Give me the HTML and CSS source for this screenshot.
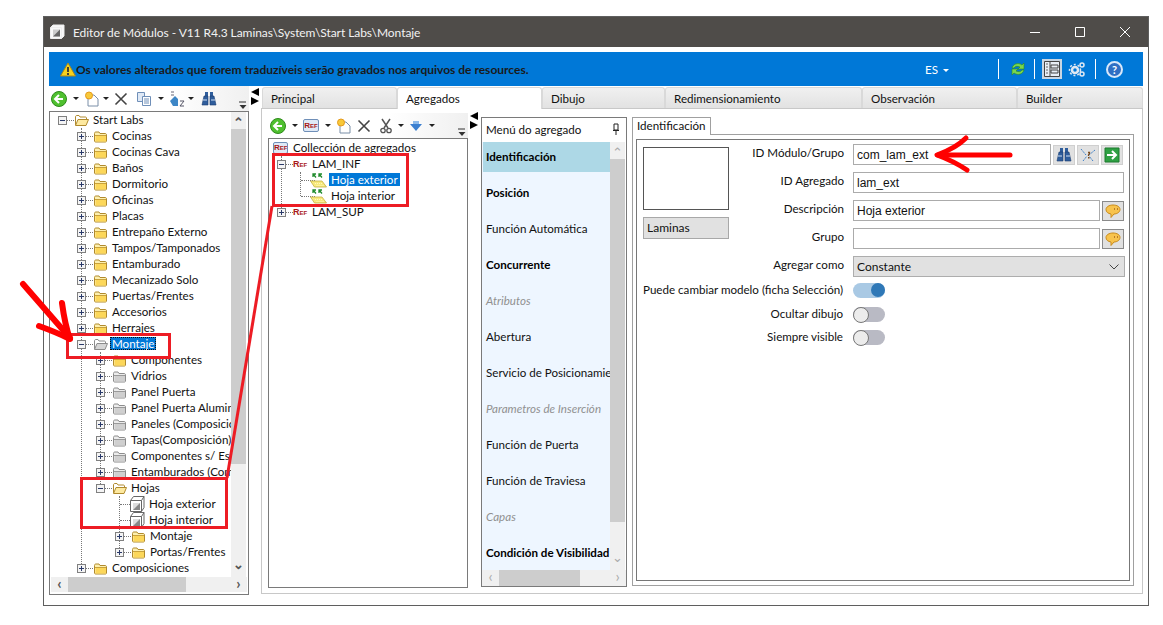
FILE: index.html
```html
<!doctype html>
<html lang="es">
<head>
<meta charset="utf-8">
<title>Editor de Módulos</title>
<link rel="stylesheet" href="styles.css">
</head>
<body>

<svg class="defs" width="0" height="0">
	<symbol id="folder" viewBox="0 0 15 14"><path d="M1.500 4.500c0-1 .5-1.500 1.500-1.500h3l1 1.500h5c1 0 1.500.5 1.500 1.500v6c0 .5-.5 1-1 1H2.500c-.5 0-1-.5-1-1z" fill="#fdf0b0" stroke="#b08a2e"/><path d="M2.500 7h10.500v5.500H2.500z" fill="#fcd75a"/><path d="M2 6.500h11" stroke="#c9a23c"/></symbol>
	<symbol id="folder-grey" viewBox="0 0 15 14"><path d="M1.500 4.500c0-1 .5-1.500 1.500-1.500h3l1 1.500h5c1 0 1.500.5 1.500 1.500v6c0 .5-.5 1-1 1H2.500c-.5 0-1-.5-1-1z" fill="#ececec" stroke="#8c8c8c"/><path d="M2.500 7h10.500v5.500H2.500z" fill="#cfcfcf"/><path d="M2 6.500h11" stroke="#9a9a9a"/></symbol>
	<symbol id="folder-open" viewBox="0 0 15 14"><path d="M1.500 12V4c0-1 .5-1.500 1.500-1.500h2L6 4h5.500c.5 0 1 .5 1 1v2" fill="#fff" stroke="#b08a2e"/><path d="M1.500 12.500L4 6.500h10.500L12 12.500z" fill="#fde9a0" stroke="#b08a2e"/></symbol>
	<symbol id="folder-grey-open" viewBox="0 0 15 14"><path d="M1.500 12V4c0-1 .5-1.500 1.500-1.500h2L6 4h5.500c.5 0 1 .5 1 1v2" fill="#fff" stroke="#8c8c8c"/><path d="M1.500 12.500L4 6.500h10.500L12 12.500z" fill="#d6d6d6" stroke="#8c8c8c"/></symbol>
	<symbol id="cube" viewBox="0 0 16 16"><path d="M1.500 4.500h11v11h-11zM1.500 4.500L4.500.5h10.500v11l-2.500 4M12.500 4.500l2.500-4" fill="#fff" stroke="#666"/><path d="M4 7h7v7H4z" fill="#ddd"/><path d="M4 14l7-7v7z" fill="#888"/></symbol>
	<symbol id="sheet" viewBox="0 0 17 16"><path d="M.5 9h11.500l4.500 6H4.500z" fill="#f7e97c" stroke="#c4b044" stroke-width=".8"/><path d="M5 11.500h7M6.500 13.500h7" stroke="#fff8c0" stroke-dasharray="1 1"/><path d="M3 2l3 3.500M3 5V2h3M9 2l3 3.500M9 5V2h3" fill="none" stroke="#1f8a2c" stroke-width="1.300"/></symbol>
	<symbol id="back" viewBox="0 0 16 16"><circle cx="8" cy="8" r="7.500" fill="#4fc02f" stroke="#2f8a1c"/><path d="M8 4L4 8l4 4M4.500 8H12" fill="none" stroke="#fff" stroke-width="2"/></symbol>
	<symbol id="newdoc" viewBox="0 0 16 16"><path d="M4 4h6l4 4v7H4z" fill="#fff" stroke="#7a8fa8"/><circle cx="5" cy="4.500" r="3.500" fill="#f8c93a" stroke="#e59a1c"/></symbol>
	<symbol id="cross" viewBox="0 0 14 14"><path d="M1.500 1.500l11 11M12.500 1.500l-11 11" stroke="#444" stroke-width="1.600"/></symbol>
	<symbol id="copy" viewBox="0 0 16 16"><path d="M1.500 1.500h7v9h-7z" fill="#dfe9f6" stroke="#6f8fb8"/><path d="M6.500 5.500h8v9h-8z" fill="#fff" stroke="#6f8fb8"/><path d="M8 8h5M8 10h5M8 12h5" stroke="#6f8fb8"/></symbol>
	<symbol id="sort" viewBox="0 0 16 16"><path d="M2 1h3M2 4h3" stroke="#667"/><path d="M1 10l5-5 3 3v7H4z" fill="#3d86c6"/><path d="M11 10h4l-4 5h4" fill="none" stroke="#556"/></symbol>
	<symbol id="bino" viewBox="0 0 16 16"><path d="M4 1h3v5H4zM9 1h3v5H9z" fill="#2f5d9c"/><path d="M1 14l2-9h4v9zM15 14l-2-9H9v9z" fill="#2f5d9c" stroke="#183a6e" stroke-width=".6"/><path d="M2 9h4M10 9h4" stroke="#cfe0f4"/></symbol>
	<symbol id="scissors" viewBox="0 0 12 16"><path d="M2 1l6 9M10 1L4 10" stroke="#555" stroke-width="1.500"/><circle cx="3" cy="12.500" r="2.200" fill="#fff" stroke="#555" stroke-width="1.300"/><circle cx="9" cy="12.500" r="2.200" fill="#fff" stroke="#555" stroke-width="1.300"/></symbol>
	<symbol id="down" viewBox="0 0 14 12"><path d="M1 4h12L7 11z" fill="#3b7fd0"/><path d="M4 1h6v3H4z" fill="#8cb9ea"/></symbol>
	<symbol id="balloon" viewBox="0 0 16 16"><path d="M8 2c4 0 7 1.800 7 4.500S12 11 9 11l-3 3.500V11C3 10.500 1 9 1 6.500S4 2 8 2z" fill="#f8c34c" stroke="#c98b1c"/><path d="M9 6h1M12 6h1" stroke="#a5641c" stroke-width="1.500"/></symbol>
	<symbol id="grip" viewBox="0 0 8 9"><path d="M0 1h7" stroke="#333"/><path d="M0.500 4h7L4 8z" fill="#333"/></symbol>
</svg>

<div class="window">
	<div class="titlebar">
		<svg class="title-icon" width="16" height="16" viewBox="0 0 16 16"><path d="M1.500 3.500h11v11h-11zM1.500 3.500L4 1h11v11l-2.500 2.500" fill="#f8f8f8" stroke="#eee"/><path d="M4 5.500h7v7H4z" fill="#ccc"/><path d="M4 12.500l7-7v7z" fill="#666"/></svg>
		<span class="title-text">Editor de Módulos - V11 R4.3 Laminas\System\Start Labs\Montaje</span>
		<div class="win-btns">
			<span class="win-btn"><svg width="10" height="10"><path d="M0 5.500h10" stroke="#fff"/></svg></span>
			<span class="win-btn"><svg width="10" height="10"><path d="M.5.500h9v9h-9z" fill="none" stroke="#fff"/></svg></span>
			<span class="win-btn"><svg width="10" height="10"><path d="M0 0l10 10M10 0L0 10" stroke="#fff"/></svg></span>
		</div>
	</div>

	<div class="content">
		<div class="banner">
			<svg class="warn" width="16" height="15" viewBox="0 0 16 15"><path d="M8 1l7.500 13H.5z" fill="#f7d21e" stroke="#a8891a"/><path d="M8 5v5M8 11v2" stroke="#333" stroke-width="1.800"/></svg>
			<span class="banner-text">Os valores alterados que forem traduzíveis serão gravados nos arquivos de resources.</span>
			<span class="lang">ES <i class="caret caret--white"></i></span>
			<span class="sep"></span>
			<svg class="ban-icon" width="16" height="16" viewBox="0 0 16 16"><path d="M2 7c1-4 6-6 10-3l2-2v6H8l2-2C8 5 5 5 4 7z" fill="#78d650" stroke="#2c8a20" stroke-width=".6"/><path d="M14 9c-1 4-6 6-10 3l-2 2V8h6l-2 2c2 1 5 1 6-1z" fill="#78d650" stroke="#2c8a20" stroke-width=".6"/></svg>
			<span class="sep sep--b"></span>
			<span class="ban-toggle"><svg width="16" height="16" viewBox="0 0 16 16"><path d="M.5.500h15v15H.5z" fill="#e8eef5" stroke="#444"/><path d="M6 1v14M7 4h7v3H7zM7 9h7v3H7z" fill="none" stroke="#444"/><path d="M2 3h2M2 6h2M2 9h2M2 12h2" stroke="#666"/></svg></span>
			<svg class="ban-gears" width="18" height="18" viewBox="0 0 18 18"><circle cx="7" cy="10" r="3" fill="none" stroke="#dfe8f2" stroke-width="2.500"/><circle cx="7" cy="10" r="5.500" fill="none" stroke="#dfe8f2" stroke-width="1.500" stroke-dasharray="2 2"/><circle cx="14" cy="5" r="2" fill="none" stroke="#dfe8f2" stroke-width="1.500"/><circle cx="14" cy="14" r="2" fill="none" stroke="#dfe8f2" stroke-width="1.500"/></svg>
			<span class="sep sep--c"></span>
			<span class="help">?</span>
		</div>

		<div class="main">
			<div class="col-left">
				<div class="toolbar">
					<svg class="tb-16"><use href="#back"/></svg><i class="caret caret--a"></i>
					<svg class="tb-16 tb-new"><use href="#newdoc"/></svg><i class="caret"></i>
					<svg class="tb-14 tb-x"><use href="#cross"/></svg>
					<svg class="tb-16 tb-copy"><use href="#copy"/></svg><i class="caret caret--a"></i>
					<svg class="tb-16 tb-sort"><use href="#sort"/></svg><i class="caret"></i>
					<svg class="tb-16 tb-bino"><use href="#bino"/></svg>
					<svg class="grip"><use href="#grip"/></svg>
				</div>
				<div class="box box--tree">
					<div class="scroll-body">
						<ul class="tree">
							<li>
								<div class="row"><span class="ex"></span><svg class="ic"><use href="#folder-open"/></svg><span>Start Labs</span></div>
								<ul class="kids kids--main">
									<li><div class="row"><span class="ex ex--plus"></span><svg class="ic"><use href="#folder"/></svg><span>Cocinas</span></div></li>
									<li><div class="row"><span class="ex ex--plus"></span><svg class="ic"><use href="#folder"/></svg><span>Cocinas Cava</span></div></li>
									<li><div class="row"><span class="ex ex--plus"></span><svg class="ic"><use href="#folder"/></svg><span>Baños</span></div></li>
									<li><div class="row"><span class="ex ex--plus"></span><svg class="ic"><use href="#folder"/></svg><span>Dormitorio</span></div></li>
									<li><div class="row"><span class="ex ex--plus"></span><svg class="ic"><use href="#folder"/></svg><span>Oficinas</span></div></li>
									<li><div class="row"><span class="ex ex--plus"></span><svg class="ic"><use href="#folder"/></svg><span>Placas</span></div></li>
									<li><div class="row"><span class="ex ex--plus"></span><svg class="ic"><use href="#folder"/></svg><span>Entrepaño Externo</span></div></li>
									<li><div class="row"><span class="ex ex--plus"></span><svg class="ic"><use href="#folder"/></svg><span>Tampos/Tamponados</span></div></li>
									<li><div class="row"><span class="ex ex--plus"></span><svg class="ic"><use href="#folder"/></svg><span>Entamburado</span></div></li>
									<li><div class="row"><span class="ex ex--plus"></span><svg class="ic"><use href="#folder"/></svg><span>Mecanizado Solo</span></div></li>
									<li><div class="row"><span class="ex ex--plus"></span><svg class="ic"><use href="#folder"/></svg><span>Puertas/Frentes</span></div></li>
									<li><div class="row"><span class="ex ex--plus"></span><svg class="ic"><use href="#folder"/></svg><span>Accesorios</span></div></li>
									<li><div class="row"><span class="ex ex--plus"></span><svg class="ic"><use href="#folder"/></svg><span>Herrajes</span></div></li>
									<li>
										<div class="row"><span class="ex"></span><svg class="ic"><use href="#folder-grey-open"/></svg><span class="sel sel--focus">Montaje</span></div>
										<ul class="kids kids--short">
											<li><div class="row"><span class="ex ex--plus"></span><svg class="ic"><use href="#folder"/></svg><span>Componentes</span></div></li>
											<li><div class="row"><span class="ex ex--plus"></span><svg class="ic"><use href="#folder-grey"/></svg><span>Vidrios</span></div></li>
											<li><div class="row"><span class="ex ex--plus"></span><svg class="ic"><use href="#folder-grey"/></svg><span>Panel Puerta</span></div></li>
											<li><div class="row"><span class="ex ex--plus"></span><svg class="ic"><use href="#folder-grey"/></svg><span>Panel Puerta Aluminio</span></div></li>
											<li><div class="row"><span class="ex ex--plus"></span><svg class="ic"><use href="#folder-grey"/></svg><span>Paneles (Composición)</span></div></li>
											<li><div class="row"><span class="ex ex--plus"></span><svg class="ic"><use href="#folder-grey"/></svg><span>Tapas(Composición)</span></div></li>
											<li><div class="row"><span class="ex ex--plus"></span><svg class="ic"><use href="#folder-grey"/></svg><span>Componentes s/ Estructura</span></div></li>
											<li><div class="row"><span class="ex ex--plus"></span><svg class="ic"><use href="#folder-grey"/></svg><span>Entamburados (Composición)</span></div></li>
											<li>
												<div class="row"><span class="ex"></span><svg class="ic"><use href="#folder-open"/></svg><span>Hojas</span></div>
												<ul class="kids">
													<li><div class="row"><span class="stub"></span><svg class="ic-leaf"><use href="#cube"/></svg><span>Hoja exterior</span></div></li>
													<li><div class="row"><span class="stub"></span><svg class="ic-leaf"><use href="#cube"/></svg><span>Hoja interior</span></div></li>
													<li><div class="row"><span class="ex ex--plus"></span><svg class="ic"><use href="#folder"/></svg><span>Montaje</span></div></li>
													<li><div class="row"><span class="ex ex--plus"></span><svg class="ic"><use href="#folder"/></svg><span>Portas/Frentes</span></div></li>
												</ul>
											</li>
										</ul>
									</li>
									<li><div class="row"><span class="ex ex--plus"></span><svg class="ic"><use href="#folder"/></svg><span>Composiciones</span></div></li>
								</ul>
							</li>
						</ul>
						<div class="vbar">
							<span class="sb-btn">&#8963;</span>
							<span class="thumb thumb--tree"></span>
							<span class="sb-rest"></span>
							<span class="sb-btn sb-btn--down">&#8964;</span>
						</div>
					</div>
					<div class="hbar">
						<span class="sb-btn sb-btn--h">&#8249;</span>
						<span class="thumb thumb--tree-h"></span>
						<span class="sb-rest"></span>
						<span class="sb-btn sb-btn--h">&#8250;</span>
					</div>
				</div>
			</div>

			<div class="splitter"><i class="tri tri--l"></i><i class="tri tri--r"></i></div>

			<div class="col-right">
				<div class="tabs">
					<span class="tab tab--principal">Principal</span>
					<span class="tab tab--agregados tab--active">Agregados</span>
					<span class="tab tab--dibujo">Dibujo</span>
					<span class="tab tab--redim">Redimensionamiento</span>
					<span class="tab tab--obs">Observación</span>
					<span class="tab tab--builder">Builder</span>
				</div>
				<div class="tab-panel">
					<div class="col-agg">
						<div class="toolbar toolbar--agg">
							<svg class="tb-16"><use href="#back"/></svg><i class="caret caret--a"></i>
							<span class="ref ref--btn">Ref</span><i class="caret caret--a"></i>
							<svg class="tb-16 tb-new2"><use href="#newdoc"/></svg>
							<svg class="tb-14 tb-x"><use href="#cross"/></svg>
							<svg class="tb-scis"><use href="#scissors"/></svg><i class="caret caret--a"></i>
							<svg class="tb-down"><use href="#down"/></svg><i class="caret caret--a"></i>
							<svg class="grip"><use href="#grip"/></svg>
						</div>
						<div class="box box--agg">
							<ul class="tree tree--agg">
								<li>
									<div class="row row--root"><span class="ref ref--root">Ref</span><span>Collección de agregados</span></div>
									<ul class="kids kids--agg">
										<li>
											<div class="row"><span class="ex"></span><span class="ref">Ref</span><span>LAM_INF</span></div>
											<ul class="kids">
												<li><div class="row"><span class="stub"></span><svg class="ic-sheet"><use href="#sheet"/></svg><span class="sel">Hoja exterior</span></div></li>
												<li><div class="row"><span class="stub"></span><svg class="ic-sheet"><use href="#sheet"/></svg><span>Hoja interior</span></div></li>
											</ul>
										</li>
										<li><div class="row"><span class="ex ex--plus"></span><span class="ref">Ref</span><span>LAM_SUP</span></div></li>
									</ul>
								</li>
							</ul>
						</div>
					</div>

					<div class="splitter splitter--agg"><i class="tri tri--l"></i><i class="tri tri--r"></i></div>

					<div class="menu">
						<div class="menu-head">
							<span>Menú do agregado</span>
							<svg width="8" height="12" viewBox="0 0 8 12"><path d="M2 1h4v6H2zM1 7.500h6M4 8v4" fill="none" stroke="#222"/></svg>
						</div>
						<div class="menu-body">
							<ul class="menu-list">
								<li class="menu-item menu-item--bold menu-item--on">Identificación</li>
								<li class="menu-item menu-item--bold">Posición</li>
								<li class="menu-item">Función Automática</li>
								<li class="menu-item menu-item--bold">Concurrente</li>
								<li class="menu-item menu-item--off">Atributos</li>
								<li class="menu-item">Abertura</li>
								<li class="menu-item">Servicio de Posicionamiento</li>
								<li class="menu-item menu-item--off">Parametros de Inserción</li>
								<li class="menu-item">Función de Puerta</li>
								<li class="menu-item">Función de Traviesa</li>
								<li class="menu-item menu-item--off">Capas</li>
								<li class="menu-item menu-item--bold">Condición de Visibilidad</li>
							</ul>
							<div class="vbar vbar--menu">
								<span class="sb-btn sb-btn--light">&#8963;</span>
								<span class="thumb thumb--menu"></span>
								<span class="sb-rest"></span>
								<span class="sb-btn sb-btn--light sb-btn--down">&#8964;</span>
							</div>
						</div>
						<div class="hbar hbar--menu">
							<span class="sb-btn sb-btn--h sb-btn--light">&#8249;</span>
							<span class="thumb thumb--menu-h"></span>
							<span class="sb-rest"></span>
							<span class="sb-btn sb-btn--h sb-btn--light">&#8250;</span>
						</div>
					</div>

					<div class="detail">
						<span class="detail-tab">Identificación</span>
						<div class="frame">
							<div class="frame-inner">
								<div class="form-top">
									<div class="preview-col">
										<div class="preview"></div>
										<div class="preview-name">Laminas</div>
									</div>
									<div class="fields">
										<div class="field">
											<label class="field-label">ID Módulo/Grupo</label>
											<span class="input input--code">com_lam_ext</span>
											<span class="btn"><svg width="16" height="16"><use href="#bino"/></svg></span>
											<span class="btn"><svg width="16" height="16" viewBox="0 0 16 16"><path d="M1 2l5 6M15 3L9 8M3 14l4-5M13 14L9 9" stroke="#3d7fc6" stroke-dasharray="2 1" fill="none"/><path d="M8 5.500h1.500v1L8.500 8v1" fill="none" stroke="#7a4a1c" stroke-width="1.300"/><path d="M8 10h1.500v1.500H8z" fill="#7a4a1c"/></svg></span>
											<span class="btn"><svg width="16" height="16" viewBox="0 0 16 16"><path d="M1 1h14v14H1z" fill="#2ea043" stroke="#1c7a2e"/><path d="M3 8h8M8 4l4 4-4 4" fill="none" stroke="#fff" stroke-width="2"/></svg></span>
										</div>
										<div class="field">
											<label class="field-label">ID Agregado</label>
											<span class="input">lam_ext</span>
										</div>
										<div class="field">
											<label class="field-label">Descripción</label>
											<span class="input">Hoja exterior</span>
											<span class="btn btn--say"><svg width="16" height="16"><use href="#balloon"/></svg></span>
										</div>
										<div class="field">
											<label class="field-label">Grupo</label>
											<span class="input"></span>
											<span class="btn btn--say"><svg width="16" height="16"><use href="#balloon"/></svg></span>
										</div>
										<div class="field">
											<label class="field-label">Agregar como</label>
											<span class="select">Constante<svg width="10" height="6" viewBox="0 0 10 6"><path d="M.5.500L5 5 9.500.500" fill="none" stroke="#444"/></svg></span>
										</div>
									</div>
								</div>
								<div class="switches">
									<div class="switch-row"><span class="switch-label">Puede cambiar modelo (ficha Selección)</span><span class="switch switch--on"></span></div>
									<div class="switch-row"><span class="switch-label">Ocultar dibujo</span><span class="switch"></span></div>
									<div class="switch-row"><span class="switch-label">Siempre visible</span><span class="switch"></span></div>
								</div>
							</div>
						</div>
					</div>
				</div>
			</div>
		</div>
	</div>
</div>

<!-- marks drawn on top of the screenshot -->
<svg class="marks" width="1163" height="625" viewBox="0 0 1163 625">
	<g fill="none" stroke="#ed1c24" stroke-width="3">
		<path d="M67.500 334.500h102v23h-102z"/>
		<path d="M81.500 478.500h145v49h-145z"/>
		<path d="M273.500 154.500h134v51h-134z"/>
		<path d="M272 206L227 478"/>
	</g>
	<g fill="none" stroke="#f00" stroke-linecap="round" stroke-linejoin="round">
		<path d="M23 284L70 338" stroke-width="6"/>
		<path d="M62 303C64 318 66 328 70 339C60 334 50 330 39 326" stroke-width="6"/>
		<path d="M938 155H1010" stroke-width="5"/>
		<path d="M966 138C958 146 948 151 937 155C948 159 958 164 967 170" stroke-width="5"/>
	</g>
</svg>

</body>
</html>
```
FILE: styles.css
```css
* {
	box-sizing: border-box;
}

html, body {
	margin: 0;
	padding: 0;
	height: 100%;
	overflow: hidden;
	background: #fff;
}

body {
	position: relative;
	font-family: Lato, "Liberation Sans", Arial, sans-serif;
	font-size: 11.600px;
	color: #111;
}

ul {
	margin: 0;
	padding: 0;
	list-style: none;
}

.defs {
	position: absolute;
}

.marks {
	position: absolute;
	left: 0;
	top: 0;
	pointer-events: none;
}

.window {
	width: 1106px;
	height: 590px;
	margin: 16px 0 0 43px;
	border: 1px solid #5f5f5f;
	background: #fff;
}

/* title bar */
.titlebar {
	display: flex;
	align-items: center;
	height: 30px;
	padding-left: 5px;
	background: #4f4c49;
	color: #f2f2f2;
}

.title-icon {
	margin-right: 8px;
}

.title-text {
	font-size: 12px;
	letter-spacing: -0.060px;
}

.win-btns {
	display: flex;
	margin-left: auto;
	margin-right: 18px;
	gap: 35px;
}

.win-btn {
	display: flex;
}

.content {
	padding: 5px 5px 0;
}

/* blue banner */
.banner {
	display: flex;
	align-items: center;
	height: 34px;
	padding-left: 11px;
	background: #0078d7;
}

.warn {
	flex: none;
}

.banner-text {
	width: 849px;
	font-size: 12px;
	font-weight: bold;
	color: #1a1a1a;
	white-space: nowrap;
}

.lang {
	display: flex;
	align-items: center;
	width: 73px;
	color: #fff;
	gap: 5px;
}

.sep {
	width: 1px;
	height: 20px;
	background: #fff;
}

.sep--b {
	margin-left: 8px;
}

.sep--c {
	margin-left: 9px;
}

.ban-icon {
	margin-left: 11px;
}

.ban-toggle {
	display: flex;
	align-items: center;
	justify-content: center;
	width: 20px;
	height: 20px;
	margin-left: 7px;
	background: #c9d6e3;
}

.ban-gears {
	margin-left: 6px;
}

.help {
	width: 17px;
	height: 17px;
	margin-left: 10px;
	border: 2px solid #d8e8fa;
	border-radius: 50%;
	background: #2f6fc4;
	color: #fff;
	font-weight: bold;
	font-size: 11px;
	line-height: 13px;
	text-align: center;
}

/* main area */
.main {
	display: flex;
	height: 509px;
}

.col-left {
	width: 200px;
}

.toolbar {
	display: flex;
	align-items: center;
	height: 25px;
	padding-left: 2px;
	background: linear-gradient(90deg, #fff 60%, #f0f0f0);
}

.toolbar svg {
	flex: none;
}

.tb-16 {
	width: 16px;
	height: 16px;
}

.tb-14 {
	width: 14px;
	height: 14px;
}

.tb-new {
	margin-left: 5px;
}

.tb-new2 {
	margin-left: 5px;
}

.tb-x {
	margin-left: 5px;
}

.tb-copy {
	margin-left: 8px;
}

.tb-sort {
	margin-left: 5px;
}

.tb-bino {
	margin-left: 7px;
}

.tb-scis {
	width: 12px;
	height: 16px;
	margin-left: 9px;
}

.tb-down {
	width: 14px;
	height: 12px;
	margin-left: 5px;
}

.grip {
	width: 8px;
	height: 9px;
	margin-left: auto;
	margin-right: 2px;
	margin-top: 13px;
}

.caret {
	flex: none;
	width: 0;
	height: 0;
	margin-left: 3px;
	border-left: 3px solid transparent;
	border-right: 3px solid transparent;
	border-top: 3px solid #222;
}

.caret--a {
	margin-left: 6px;
}

.caret--white {
	margin: 2px 0 0;
	border-top-color: #fff;
}

.box {
	border: 1px solid #7a7a7a;
	background: #fff;
}

.box--tree {
	display: flex;
	flex-direction: column;
	height: 484px;
}

.scroll-body {
	display: flex;
	flex: 1;
	min-height: 0;
}

.tree {
	flex: 1;
	min-width: 0;
	padding: 0 0 0 8px;
	overflow: hidden;
	white-space: nowrap;
}

.kids {
	position: relative;
	margin-left: 19px;
}

.kids::before {
	content: "";
	position: absolute;
	left: 4px;
	top: 0;
	bottom: 8px;
	border-left: 1px dotted #777;
}

.kids--short::before {
	bottom: 72px;
}

.kids--agg {
	margin-left: 0;
}

.row {
	position: relative;
	display: flex;
	align-items: center;
	height: 16px;
}

.row > span:last-child {
	margin-bottom: 2px;
}

.row--root {
	margin-left: -4px;
}

.ex {
	position: relative;
	flex: none;
	width: 9px;
	height: 9px;
	margin-right: 7px;
	border: 1px solid #808080;
	background: linear-gradient(#2a3a6a, #2a3a6a) center / 5px 1px no-repeat, #f4f4f4;
}

.ex--plus {
	background: linear-gradient(#2a3a6a, #2a3a6a) center / 5px 1px no-repeat, linear-gradient(#2a3a6a, #2a3a6a) center / 1px 5px no-repeat, #f4f4f4;
}

.ex::after {
	content: "";
	position: absolute;
	left: 8px;
	top: 3px;
	width: 7px;
	border-top: 1px dotted #777;
}

.stub {
	flex: none;
	width: 14px;
	height: 1px;
	margin-left: 5px;
	margin-right: -5px;
	border-top: 1px dotted #777;
}

.ic {
	flex: none;
	width: 15px;
	height: 14px;
	margin-right: 4px;
}

.ic-leaf {
	flex: none;
	width: 16px;
	height: 16px;
	margin-right: 4px;
}

.ic-sheet {
	flex: none;
	width: 17px;
	height: 16px;
	margin-right: 4px;
}

.sel {
	margin-left: -2px;
	padding: 0 2px;
	background: #0078d7;
	color: #fff;
}

.sel--focus {
	outline: 1px dotted #111;
	outline-offset: -1px;
}

.ref {
	flex: none;
	width: 19px;
	font-family: "Liberation Sans", Arial, sans-serif;
	font-size: 9px;
	font-weight: bold;
	font-variant: small-caps;
	color: #a81818;
}

.ref--root {
	width: 15px;
	height: 12px;
	margin-right: 5px;
	border: 1px solid #6f8fb8;
	border-radius: 2px;
	background: #dfe9f6;
	font-size: 8px;
	line-height: 10px;
	text-align: center;
}

.ref--btn {
	width: 16px;
	height: 13px;
	margin-left: 5px;
	border: 1px solid #6f8fb8;
	border-radius: 2px;
	background: #dfe9f6;
	font-size: 8px;
	line-height: 11px;
	text-align: center;
}

/* scrollbars */
.vbar {
	display: flex;
	flex: none;
	flex-direction: column;
	width: 15px;
	margin-right: 2px;
	background: #f0f0f0;
}

.hbar {
	display: flex;
	flex: none;
	height: 15px;
	margin: 0 1px 2px;
	background: #f0f0f0;
}

.sb-btn {
	display: block;
	flex: none;
	height: 17px;
	color: #555;
	font-size: 13px;
	line-height: 20px;
	font-weight: bold;
	text-align: center;
}

.sb-btn--down {
	line-height: 8px;
}

.sb-btn--h {
	width: 17px;
	height: auto;
	line-height: 13px;
	font-size: 15px;
}

.sb-btn--light {
	color: #aaa;
	font-weight: normal;
}

.sb-rest {
	flex: 1;
}

.thumb {
	display: block;
	flex: none;
	background: #cdcdcd;
}

.thumb--tree {
	height: 335px;
}

.thumb--tree-h {
	width: 118px;
}

.thumb--menu {
	height: 363px;
}

.thumb--menu-h {
	width: 81px;
}

.splitter {
	display: flex;
	flex: none;
	flex-direction: column;
	align-items: center;
	width: 12px;
	padding-top: 2px;
}

.splitter--agg {
	padding-top: 3px;
}

.tri {
	width: 0;
	height: 0;
	margin-bottom: 1px;
	border-top: 4px solid transparent;
	border-bottom: 4px solid transparent;
}

.tri--l {
	border-right: 8px solid #000;
}

.tri--r {
	border-left: 8px solid #000;
}

/* tabs */
.col-right {
	flex: 1;
	min-width: 0;
}

.tabs {
	display: flex;
	height: 22px;
	margin-top: 1px;
	padding-left: 1px;
}

.tab {
	display: flex;
	align-items: center;
	height: 21px;
	padding-left: 8px;
	border: 1px solid #d9d9d9;
	border-bottom: 0;
	border-radius: 3px 3px 0 0;
	background: linear-gradient(#f0f0f0, #e2e2e2);
}

.tab--active {
	height: 22px;
	background: #fff;
}

.tab--principal {
	width: 135px;
}

.tab--agregados {
	width: 145px;
}

.tab--dibujo {
	width: 123px;
}

.tab--redim {
	width: 197px;
}

.tab--obs {
	width: 155px;
}

.tab--builder {
	width: 126px;
}

.tab-panel {
	display: flex;
	height: 486px;
	margin-top: -1px;
	padding-left: 6px;
	border: 1px solid #c8c8c8;
	background: #fff;
}

.col-agg {
	flex: none;
	width: 200px;
}

.toolbar--agg {
	margin-top: 4px;
}

.box--agg {
	height: 450px;
}

.tree--agg {
	padding-top: 1px;
}

/* menu column */
.menu {
	display: flex;
	flex: none;
	flex-direction: column;
	width: 146px;
	height: 470px;
	margin-top: 8px;
	margin-left: 1px;
	border: 1px solid #7a7a7a;
}

.menu-head {
	display: flex;
	align-items: center;
	justify-content: space-between;
	flex: none;
	height: 24px;
	padding: 0 6px 2px 4px;
}

.menu-body {
	display: flex;
	flex: 1;
	min-height: 0;
}

.menu-list {
	flex: 1;
	min-width: 0;
	padding-left: 1px;
	overflow: hidden;
	background: #eef6ff;
}

.menu-item {
	display: flex;
	align-items: center;
	height: 30px;
	margin-bottom: 6px;
	padding-left: 3px;
	padding-bottom: 2px;
	white-space: nowrap;
	overflow: hidden;
}

.menu-item--bold {
	font-weight: bold;
	color: #000;
}

.menu-item--off {
	font-style: italic;
	color: #909090;
}

.menu-item--on {
	background: #add8e6;
}

.vbar--menu {
	margin-right: 1px;
}

.hbar--menu {
	margin: 0;
	height: 16px;
}

/* detail form */
.detail {
	display: flex;
	flex: none;
	flex-direction: column;
	width: 503px;
	margin-top: 8px;
	margin-left: 4px;
}

.detail-tab {
	position: relative;
	align-self: flex-start;
	height: 18px;
	margin-left: 1px;
	margin-bottom: -1px;
	padding: 1px 4px 0 4px;
	border: 1px solid #a0a0a0;
	border-bottom: 0;
	background: #fff;
}

.frame {
	height: 452px;
	margin-left: 1px;
	padding: 4px 3px;
	border: 1px solid #a0a0a0;
}

.frame-inner {
	height: 100%;
	padding: 4px 5px 0 6px;
	border: 1px solid #777;
}

.form-top {
	display: flex;
}

.preview-col {
	flex: none;
	width: 86px;
	margin-top: 3px;
}

.preview {
	height: 63px;
	border: 1px solid #555;
}

.preview-name {
	height: 22px;
	margin-top: 7px;
	padding-left: 3px;
	border: 1px solid #a8a8a8;
	background: #e1e1e1;
	font-size: 12px;
	line-height: 20px;
}

.fields {
	display: flex;
	flex: 1;
	flex-direction: column;
	gap: 7px;
}

.field {
	display: flex;
	align-items: center;
	height: 21px;
}

.field-label {
	flex: none;
	width: 115px;
	margin-right: 9px;
	padding-bottom: 4px;
	text-align: right;
	white-space: nowrap;
}

.input {
	flex: 1;
	min-width: 0;
	height: 21px;
	padding-left: 3px;
	border: 1px solid #ababab;
	font-family: "Liberation Sans", Arial, sans-serif;
	font-size: 12px;
	line-height: 20px;
	background: #fff;
}

.btn {
	display: flex;
	align-items: center;
	justify-content: center;
	flex: none;
	width: 22px;
	height: 20px;
	margin-left: 2px;
	background: #e1e1e1;
	border: 1px solid #cfcfcf;
}

.btn--say {
	border-color: #8a8a8a;
}

.input--code + .btn + .btn + .btn {
	margin-right: 1px;
}

.select {
	display: flex;
	align-items: center;
	justify-content: space-between;
	flex: 1;
	height: 21px;
	margin-right: -1px;
	padding: 0 5px 0 3px;
	border: 1px solid #adadad;
	background: #e1e1e1;
	font-size: 12px;
}

.switches {
	display: flex;
	flex-direction: column;
	gap: 8.500px;
	margin-top: 6px;
}

.switch-row {
	display: flex;
	align-items: center;
	height: 15px;
}

.switch-label {
	flex: none;
	width: 200px;
	margin-right: 10px;
	padding-bottom: 2px;
	text-align: right;
	white-space: nowrap;
}

.switch {
	position: relative;
	flex: none;
	width: 32px;
	height: 15px;
	border-radius: 8px;
	background: #b9bac4;
}

.switch::after {
	content: "";
	position: absolute;
	left: 0;
	top: 0;
	width: 14px;
	height: 14px;
	border: 1px solid #777;
	border-radius: 50%;
	background: #ececec;
}

.switch--on {
	background: #a9c9e4;
}

.switch--on::after {
	left: 18px;
	border: 0;
	background: #2f78b7;
}
```
